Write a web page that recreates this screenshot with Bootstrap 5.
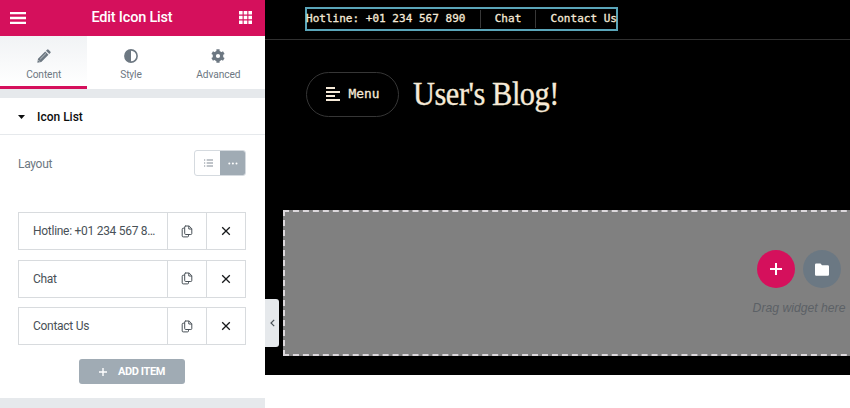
<!DOCTYPE html>
<html lang="en">
<head>
<meta charset="utf-8">
<meta name="viewport" content="width=device-width, initial-scale=1">
<title>Edit Icon List</title>
<link href="https://cdn.jsdelivr.net/npm/bootstrap@5.3.0/dist/css/bootstrap.min.css" rel="stylesheet">
<style>
  body{height:408px;font-family:Roboto,sans-serif;font-size:12px;line-height:1;color:#495157;background:#fff}
  svg{display:block;flex:none}
  .panel{width:265px;height:408px;background:#e6e9ec;z-index:2}
  .panel-top{height:36px;background:#d5105c;padding:0 13px 1px 10px}
  .panel-title{font-size:14.5px;font-weight:500;letter-spacing:-.2px;padding:2px 1px 0 0}
  .panel-tabs{height:53px;background:#fff;color:#6d7882;padding-right:3px}
  .panel-tab{flex:1 1 0;padding-top:13px;gap:7px;font-size:10.2px;letter-spacing:-.1px}
  .panel-tab.current{background:linear-gradient(#f1f3f5,#fff);border-bottom:3px solid #d5105c}
  .section-head{height:37px;margin-top:9px;padding:2px 0 0 18px;gap:12px;background:#fff;border-bottom:1px solid #e6e9ec;font-weight:500;color:#0c0d0e}
  .section-body{height:263px;background:#fff;padding:15px 19px 0 18px}
  .layout-row{height:26px;color:#6d7882;margin-bottom:36px;letter-spacing:-.3px}
  .layout-label{padding-top:1px}
  .choice{width:52px;height:26px;border:1px solid #d5dadf;border-radius:3px;overflow:hidden}
  .choice>span{flex:1}
  .choice .on{background:#a0abb4;margin:-1px}
  .item{height:38px;border:1px solid #d8dbde;background:#fff;margin-bottom:9.5px;color:#495157;letter-spacing:-.28px}
  .item-name{flex:1;padding-left:14px}
  .item-tool{width:39px;border-left:1px solid #d8dbde}
  .add{width:106px;height:25px;background:#a0abb4;border-radius:3px;font-size:11px;font-weight:700;letter-spacing:-.38px;gap:11px;margin:14px auto 0}
  .preview{height:375px;background:#000;color:#f6ead8}
  .site-bar{height:40px;border-bottom:1px solid #303030;padding:7px 0 0 40px}
  .contacts{width:313px;height:24px;border:2px solid #5aa5b9;font:11px/20px "DejaVu Sans Mono",monospace;letter-spacing:.02px;-webkit-text-stroke:.3px #f6ead8;white-space:nowrap}
  .contacts>:first-child{margin-left:-1px}
  .contacts>:last-child{margin-right:-1px}
  .contacts .sep{width:1px;height:18px;background:#383838}
  .site-head{padding:32px 0 0 41px;gap:14px}
  .menu-pill{width:93px;height:45px;border:1px solid #363636;border-radius:23px;gap:9px;font:12.8px/1 "DejaVu Sans Mono",monospace;-webkit-text-stroke:.3px #f6ead8;padding-bottom:1px}
  .blog-title{font:34px/44px "Liberation Serif",serif;letter-spacing:-.5px;-webkit-text-stroke:.35px #f6ead8;white-space:nowrap;transform:scaleX(.893);transform-origin:left}
  .drop{width:1032px;height:146px;margin:93px 0 0 18px;padding-top:38px;background:#808080;border:2px dashed #dcd8dc}
  .round{width:38px;height:38px;border-radius:50%}
  .add-widget{background:#d5105c}
  .add-folder{background:#6b7883}
  .drop-hint{font:italic 12.2px/14px "Liberation Sans",sans-serif;color:#5c6166;margin-top:13px}
  .collapse-tab{left:265px;top:299px;width:14px;height:48px;background:#e6e9ec;border-radius:0 3px 3px 0;z-index:3}
</style>
</head>
<body class="d-flex overflow-hidden position-relative">
<svg width="0" height="0" class="position-absolute">
  <symbol id="copy" viewBox="0 0 12 13"><path d="M4.2 1h3.9l2.7 2.7v4.8q0 1-1 1H4.7q-1 0-1-1V2q0-1 1-1zM7.8 1v3h3M3.5 3.2H2.2q-1 0-1 1v6.7q0 1 1 1h4.3q1 0 1-1V9.8" fill="none" stroke="#495157" stroke-width="1"/></symbol>
  <symbol id="cross" viewBox="0 0 10 10"><path d="M1.2 1.2l7.6 7.6M8.8 1.2L1.2 8.8" fill="none" stroke="#17191b" stroke-width="1.3"/></symbol>
</svg>
<aside class="panel flex-shrink-0">
  <header class="panel-top d-flex align-items-center justify-content-between text-white">
    <svg width="16" height="12"><path d="M0 1.2h16M0 6h16M0 10.8h16" stroke="#fff" stroke-width="2.3"/></svg>
    <span class="panel-title">Edit Icon List</span>
    <svg width="13" height="13" fill="#fff"><path d="M0 0h3.6v3.6H0zM4.7 0h3.6v3.6H4.7zM9.4 0H13v3.6H9.4zM0 4.7h3.6v3.6H0zM4.7 4.7h3.6v3.6H4.7zM9.4 4.7H13v3.6H9.4zM0 9.4h3.6V13H0zM4.7 9.4h3.6V13H4.7zM9.4 9.4H13V13H9.4z"/></svg>
  </header>
  <nav class="panel-tabs d-flex">
    <div class="panel-tab current d-flex flex-column align-items-center">
      <svg width="14" height="14" fill="#6d7882"><path d="M.3 13.7l.7-4L8.2 2.5l3.3 3.3L4.3 13zM9 1.7l1-1q.8-.8 1.6 0l1.7 1.7q.8.8 0 1.6l-1 1z"/><path d="M3.2 10.2L9 4.4M1.4 11.2l1.4 1.4" stroke="#f7f8f9" stroke-width=".6"/></svg>
      <span>Content</span>
    </div>
    <div class="panel-tab d-flex flex-column align-items-center">
      <svg width="14" height="14"><circle cx="7" cy="7" r="6.1" fill="none" stroke="#6d7882" stroke-width="1.6"/><path d="M7 1a6 6 0 0 0 0 12z" fill="#6d7882"/></svg>
      <span>Style</span>
    </div>
    <div class="panel-tab d-flex flex-column align-items-center">
      <svg width="14" height="14" viewBox="0 0 14 14"><circle cx="7" cy="7" r="3.7" fill="none" stroke="#6d7882" stroke-width="3.2"/><path d="M7 .3v3M7 10.7v3M1.2 3.65l2.6 1.5M10.2 8.85l2.6 1.5M1.2 10.35l2.6-1.5M10.2 5.15l2.6-1.5" stroke="#6d7882" stroke-width="3.2"/></svg>
      <span>Advanced</span>
    </div>
  </nav>
  <div class="section-head d-flex align-items-center">
    <svg width="7" height="4"><path d="M0 0h7L3.5 4z" fill="#0c0d0e"/></svg>
    <span>Icon List</span>
  </div>
  <div class="section-body">
    <div class="layout-row d-flex align-items-center justify-content-between">
      <span class="layout-label">Layout</span>
      <div class="choice d-flex">
        <span class="d-flex align-items-center justify-content-center"><svg width="9" height="8"><path d="M0 1h1.2M0 4h1.2M0 7h1.2M2.7 1H9M2.7 4H9M2.7 7H9" stroke="#818a94" stroke-width="1"/></svg></span>
        <span class="on d-flex align-items-center justify-content-center"><svg width="10" height="3" fill="#fff"><circle cx="1.3" cy="1.5" r="1"/><circle cx="4.9" cy="1.5" r="1"/><circle cx="8.5" cy="1.5" r="1"/></svg></span>
      </div>
    </div>
    <div class="item d-flex align-items-stretch">
      <span class="item-name d-flex align-items-center">Hotline: +01 234 567 8…</span>
      <span class="item-tool d-flex align-items-center justify-content-center"><svg width="12" height="13"><use href="#copy"/></svg></span>
      <span class="item-tool d-flex align-items-center justify-content-center"><svg width="10" height="10"><use href="#cross"/></svg></span>
    </div>
    <div class="item d-flex align-items-stretch">
      <span class="item-name d-flex align-items-center">Chat</span>
      <span class="item-tool d-flex align-items-center justify-content-center"><svg width="12" height="13"><use href="#copy"/></svg></span>
      <span class="item-tool d-flex align-items-center justify-content-center"><svg width="10" height="10"><use href="#cross"/></svg></span>
    </div>
    <div class="item d-flex align-items-stretch mb-0">
      <span class="item-name d-flex align-items-center">Contact Us</span>
      <span class="item-tool d-flex align-items-center justify-content-center"><svg width="12" height="13"><use href="#copy"/></svg></span>
      <span class="item-tool d-flex align-items-center justify-content-center"><svg width="10" height="10"><use href="#cross"/></svg></span>
    </div>
    <div class="add d-flex align-items-center justify-content-center text-white">
      <svg width="8" height="8"><path d="M4 0v8M0 4h8" stroke="#fff" stroke-width="1.4"/></svg>
      <span>ADD ITEM</span>
    </div>
  </div>
</aside>
<main class="preview flex-grow-1 overflow-hidden">
  <div class="site-bar">
    <div class="contacts d-flex align-items-center">
      <span>Hotline: +01 234 567 890</span><span class="sep ms-auto"></span>
      <span class="ms-auto">Chat</span><span class="sep ms-auto"></span>
      <span class="ms-auto">Contact Us</span>
    </div>
  </div>
  <div class="site-head d-flex">
    <div class="menu-pill d-flex align-items-center justify-content-center">
      <svg width="14" height="14"><path d="M0 1h9M0 5h14M0 9h9M0 13h14" stroke="#f6ead8" stroke-width="2"/></svg>
      <span>Menu</span>
    </div>
    <div class="blog-title">User's Blog!</div>
  </div>
  <div class="drop d-flex flex-column align-items-center">
    <div class="d-flex gap-2">
      <span class="round add-widget d-flex align-items-center justify-content-center"><svg width="12" height="12"><path d="M6 0v12M0 6h12" stroke="#fff" stroke-width="2"/></svg></span>
      <span class="round add-folder d-flex align-items-center justify-content-center"><svg width="14" height="13" fill="#fff"><path d="M1.2.5h4.3L7 2.3h5.8Q14 2.3 14 3.5v8q0 1.2-1.2 1.2H1.2Q0 12.7 0 11.5V1.7Q0 .5 1.2.5z"/></svg></span>
    </div>
    <div class="drop-hint">Drag widget here</div>
  </div>
</main>
<div class="collapse-tab position-absolute d-flex align-items-center justify-content-center">
  <svg width="5" height="8"><path d="M4.2.8L1 4l3.2 3.2" fill="none" stroke="#495157" stroke-width="1.2"/></svg>
</div>
<script src="https://cdn.jsdelivr.net/npm/bootstrap@5.3.0/dist/js/bootstrap.bundle.min.js"></script>
</body>
</html>
